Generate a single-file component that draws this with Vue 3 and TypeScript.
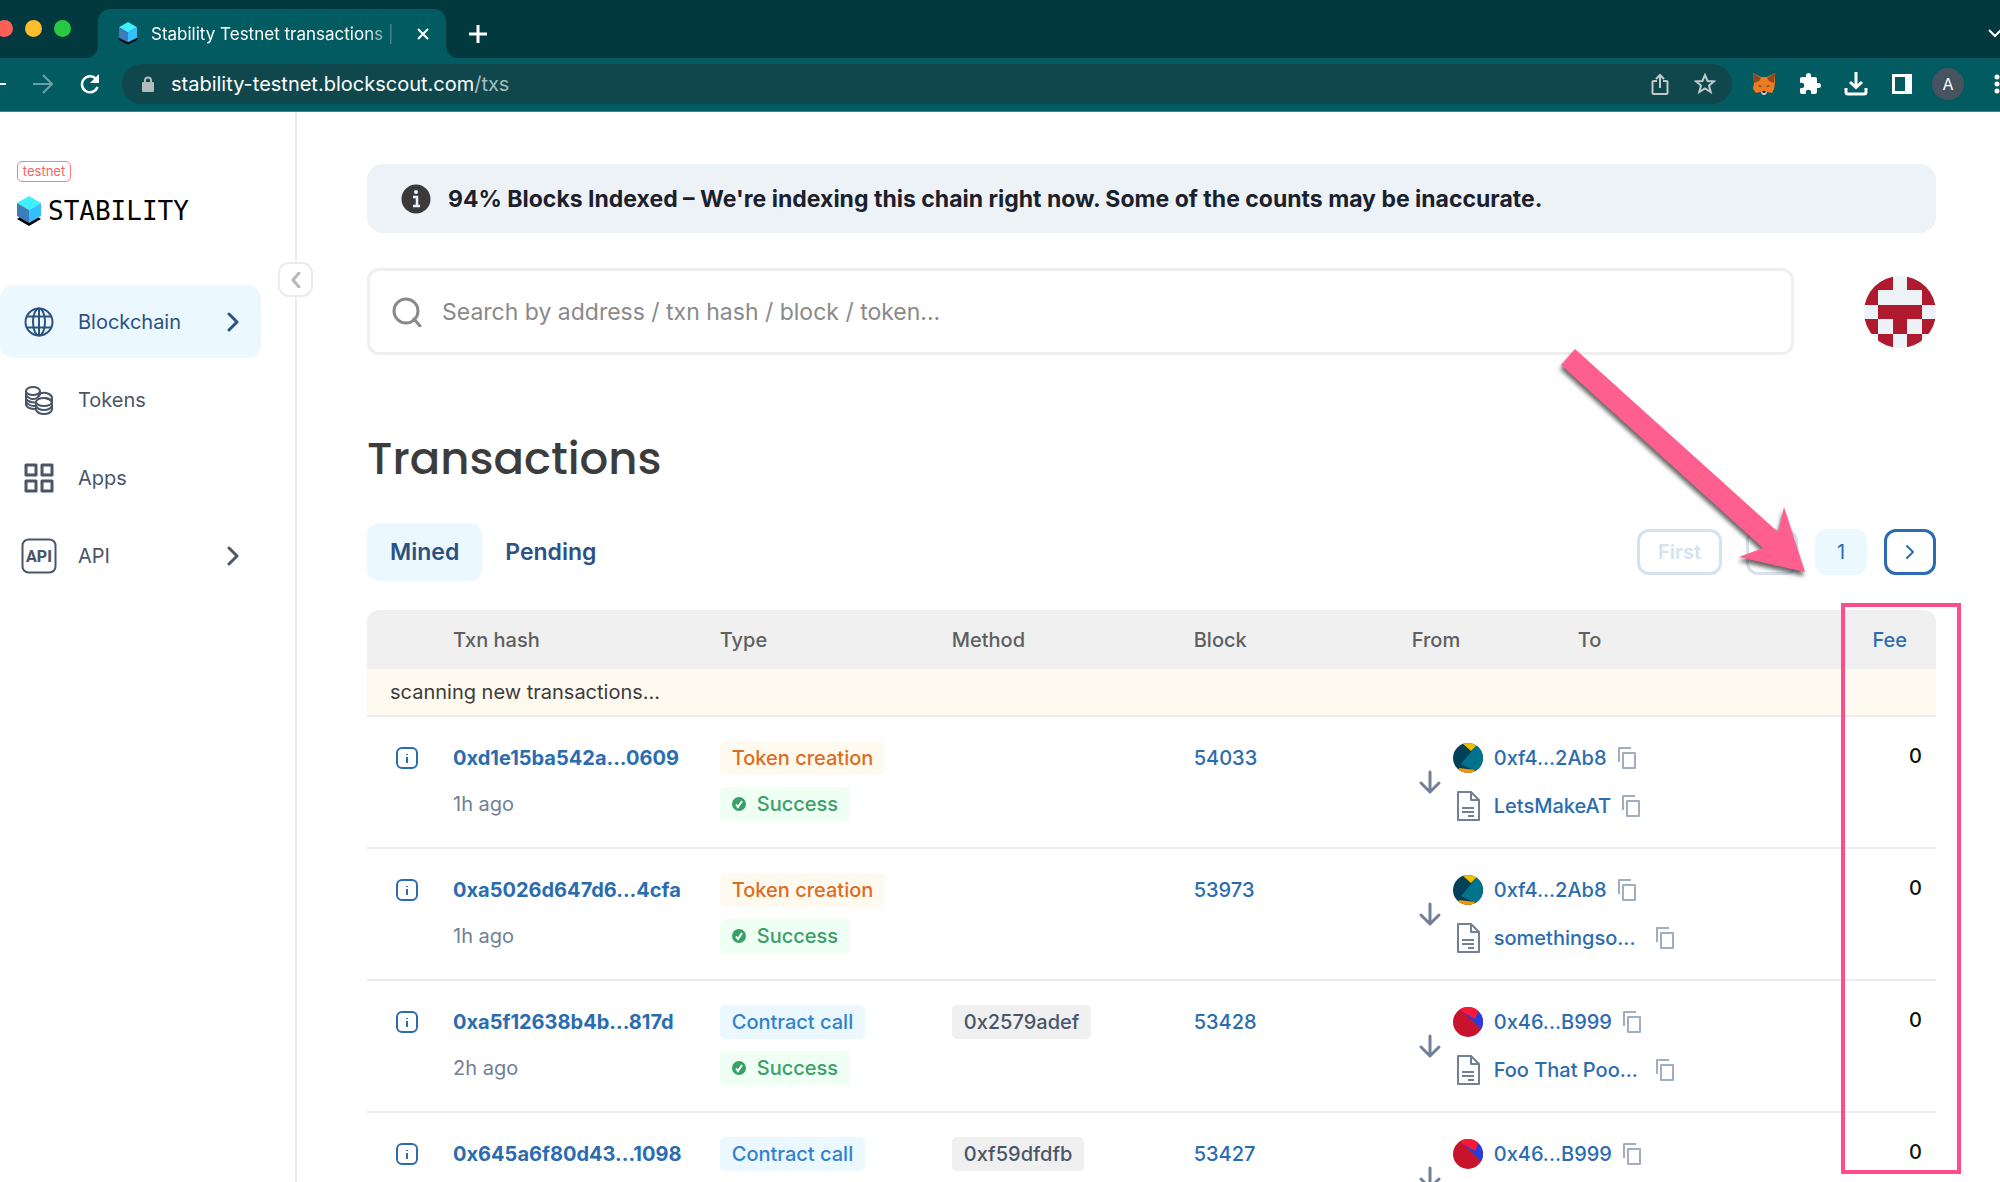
<script setup lang="ts">
interface NavItem { label: string; icon: 'globe' | 'coins' | 'grid' | 'api'; active?: boolean; expandable?: boolean }
interface Tx {
  hash: string
  age?: string
  type: string
  kind: 'creation' | 'call'
  status?: string
  method?: string
  block: string
  from: string
  avatar: 'teal' | 'red'
  to?: string
  clipped?: boolean
  fee: string
}

const nav: NavItem[] = [
  { label: 'Blockchain', icon: 'globe', active: true, expandable: true },
  { label: 'Tokens', icon: 'coins' },
  { label: 'Apps', icon: 'grid' },
  { label: 'API', icon: 'api', expandable: true },
]

const txs: Tx[] = [
  { hash: '0xd1e15ba542a...0609', age: '1h ago', type: 'Token creation', kind: 'creation', status: 'Success', block: '54033', from: '0xf4...2Ab8', avatar: 'teal', to: 'LetsMakeAT', fee: '0' },
  { hash: '0xa5026d647d6...4cfa', age: '1h ago', type: 'Token creation', kind: 'creation', status: 'Success', block: '53973', from: '0xf4...2Ab8', avatar: 'teal', to: 'somethingso...', clipped: true, fee: '0' },
  { hash: '0xa5f12638b4b...817d', age: '2h ago', type: 'Contract call', kind: 'call', status: 'Success', method: '0x2579adef', block: '53428', from: '0x46...B999', avatar: 'red', to: 'Foo That Poo...', clipped: true, fee: '0' },
  { hash: '0x645a6f80d43...1098', type: 'Contract call', kind: 'call', method: '0xf59dfdfb', block: '53427', from: '0x46...B999', avatar: 'red', fee: '0' },
]

// Filled cells of the 5x5 identicon, one string per row
const identicon = ['11011', '10001', '01110', '10101', '01010']
const identiconCells = identicon.flatMap((row, y) =>
  [...row].map((c, x) => ({ x, y, on: c === '1' })).filter((c) => c.on),
)
</script>

<template>
  <div class="window">
    <header class="chrome">
      <div class="tabstrip">
        <div class="lights"><i class="red"></i><i class="amber"></i><i class="green"></i></div>
        <div class="tab">
          <svg class="favicon" viewBox="0 0 26 32">
            <path d="M1 24 13 30 25 24V21L13 27 1 21z" fill="#000" />
            <path d="M13 0 25 7 13 14 1 7z" fill="#3ff0fc" />
            <path d="M1 7 13 14V27L1 21z" fill="#3d7dbb" />
            <path d="M25 7 13 14V27L25 21z" fill="#34c0ff" />
          </svg>
          <span class="tab-title">Stability Testnet transactions |</span>
          <button class="plain" aria-label="Close tab">
            <svg width="12" height="12" viewBox="0 0 12 12"><path d="M1 1 11 11M11 1 1 11" stroke="#fff" stroke-width="2" /></svg>
          </button>
        </div>
        <button class="plain new-tab" aria-label="New tab">
          <svg width="18" height="18" viewBox="0 0 18 18"><path d="M9 0V18M0 9H18" stroke="#fff" stroke-width="3" /></svg>
        </button>
        <button class="plain tab-search" aria-label="Search tabs">
          <svg width="14" height="10" viewBox="0 0 14 10"><path d="M1 1 7 7 13 1" fill="none" stroke="#fff" stroke-width="2" /></svg>
        </button>
      </div>
      <div class="toolbar">
        <button class="plain back" aria-label="Back">
          <svg width="20" height="20" viewBox="0 0 20 20"><path d="M1 10H20M10 1 1 10 10 19" fill="none" stroke="#fff" stroke-width="2" /></svg>
        </button>
        <button class="plain forward" aria-label="Forward">
          <svg width="20" height="20" viewBox="0 0 20 20"><path d="M0 10H18M10 1 19 10 10 19" fill="none" stroke="#6b9fa3" stroke-width="2" /></svg>
        </button>
        <button class="plain reload" aria-label="Reload">
          <svg width="20" height="20" viewBox="0 0 20 20"><path d="M16 5A8 8 0 1 0 17.500 13" fill="none" stroke="#fff" stroke-width="2.500" /><path d="M19 0V9H10z" fill="#fff" /></svg>
        </button>
        <div class="omnibox">
          <svg width="12" height="16" viewBox="0 0 12 16"><path d="M3 7V4.500a3 3 0 0 1 6 0V7" fill="none" stroke="#b4bbbf" stroke-width="2" /><rect y="6" width="12" height="10" rx="1" fill="#b4bbbf" /></svg>
          <span class="url">stability-testnet.blockscout.com<span class="path">/txs</span></span>
          <button class="plain" aria-label="Share">
            <svg width="18" height="22" viewBox="0 0 18 22"><path d="M6 8H2.500Q1.500 8 1.500 9V20Q1.500 21 2.500 21H15.500Q16.500 21 16.500 20V9Q16.500 8 15.500 8H12M9 15V2M5 6 9 2 13 6" fill="none" stroke="#c3c9cc" stroke-width="2" /></svg>
          </button>
          <button class="plain" aria-label="Bookmark">
            <svg width="22" height="21" viewBox="0 0 22 21"><path d="M11 2 13.600 8 20 8.400 15 12.600 16.700 19 11 15.500 5.300 19 7 12.600 2 8.400 8.400 8z" fill="none" stroke="#c3c9cc" stroke-width="2" /></svg>
          </button>
        </div>
        <div class="extensions">
          <button class="plain" aria-label="MetaMask">
            <svg width="24" height="24" viewBox="0 0 24 24">
              <path d="M1 1 9 5H15L23 1V11L22 17 20 21 15 20 13 22H11L9 20 4 21 1 17 2 11z" fill="#ee7b1e" />
              <path d="M1 1 9 6 7 9 2 11zM23 1 15 6 17 9 22 11z" fill="#8b4a22" />
              <path d="M10 19H14L15 21 13 23H11L9 21z" fill="#d8d0c8" />
              <path d="M10 19H14L13 21H11z" fill="#222" />
              <path d="M6 13 10 14 8 15zM18 13 14 14 16 15z" fill="#38404a" />
            </svg>
          </button>
          <button class="plain" aria-label="Extensions">
            <svg width="24" height="24" viewBox="0 0 24 24"><path d="M20.500 11H19V7a2 2 0 0 0-2-2h-4V3.500a2.500 2.500 0 0 0-5 0V5H4a2 2 0 0 0-2 2v3.800h1.500a2.700 2.700 0 0 1 0 5.400H2V20a2 2 0 0 0 2 2h3.800v-1.500a2.700 2.700 0 0 1 5.400 0V22H17a2 2 0 0 0 2-2v-4h1.500a2.500 2.500 0 0 0 0-5z" fill="#fff" /></svg>
          </button>
          <button class="plain" aria-label="Downloads">
            <svg width="24" height="24" viewBox="0 0 24 24"><path d="M12 0V15M6 10 12 15.500 18 10M2 16V20Q2 22 4 22H20Q22 22 22 20V16" fill="none" stroke="#fff" stroke-width="3" /></svg>
          </button>
          <button class="plain" aria-label="Side panel">
            <svg width="24" height="24" viewBox="0 0 24 24"><path d="M2 2H22V22H2zM5 5V19H15V5z" fill="#fff" fill-rule="evenodd" /></svg>
          </button>
          <button class="profile">A</button>
          <button class="plain menu" aria-label="Menu">
            <svg width="6" height="20" viewBox="0 0 6 20"><circle cx="3" cy="3" r="2.500" fill="#fff" /><circle cx="3" cy="10" r="2.500" fill="#fff" /><circle cx="3" cy="17" r="2.500" fill="#fff" /></svg>
          </button>
        </div>
      </div>
    </header>

    <div class="page">
      <aside class="sidebar">
        <span class="badge">testnet</span>
        <a class="logo" href="#">
          <svg width="26" height="32" viewBox="0 0 26 32">
            <path d="M1 24 13 31 25 24 22 22 13 27 4 22z" fill="#000" />
            <path d="M13 1 25 8 13 15 1 8z" fill="#3ff0fc" />
            <path d="M1 8 13 15V28L1 21z" fill="#3d7dbb" />
            <path d="M25 8 13 15V28L25 21z" fill="#34c0ff" />
          </svg>
          <span>STABILITY</span>
        </a>
        <nav>
          <a v-for="item in nav" :key="item.label" href="#" class="nav-item" :class="{ active: item.active }">
            <svg class="nav-icon" viewBox="0 0 36 36" fill="none" stroke="currentColor">
              <g v-if="item.icon === 'globe'" stroke-width="2">
                <circle cx="18" cy="18" r="13.500" />
                <ellipse cx="18" cy="18" rx="6" ry="13.500" />
                <path d="M6 12.500H30M6 23.500H30M18 4.500V31.500" />
              </g>
              <g v-else-if="item.icon === 'coins'" stroke-width="2">
                <ellipse cx="12" cy="9" rx="7" ry="4" />
                <path d="M5 9V23Q7 27 14 27M19 9V13M5 13Q8 17 12 17T19 13M5 17Q8 20.500 14 20.500M5 20Q8 24 14 24M16 13Q22 9 28 12 31 13.500 31 16V28" />
                <ellipse cx="23" cy="20" rx="8" ry="4" />
                <path d="M15 20V28Q17 32 23 32T31 28M15 24Q17 28 23 28T31 24M24 16Q29 17 31 20" />
              </g>
              <g v-else-if="item.icon === 'grid'" stroke-width="3" stroke-linejoin="round">
                <rect x="5" y="5" width="10" height="10" /><rect x="21" y="5" width="10" height="10" />
                <rect x="5" y="21" width="10" height="10" /><rect x="21" y="21" width="10" height="10" />
              </g>
              <template v-else>
                <rect x="1.500" y="1.500" width="33" height="33" rx="6" stroke-width="2" />
                <text x="18" y="24" text-anchor="middle" class="api-text">API</text>
              </template>
            </svg>
            <span class="nav-label">{{ item.label }}</span>
            <svg v-if="item.expandable" width="12" height="20" viewBox="0 0 12 20"><path d="M2 2 10 10 2 18" fill="none" stroke="currentColor" stroke-width="3" stroke-linecap="round" stroke-linejoin="round" /></svg>
          </a>
        </nav>
        <button class="collapse" aria-label="Collapse sidebar">
          <svg width="10" height="16" viewBox="0 0 10 16"><path d="M8 1 2 8 8 15" fill="none" stroke="#b8b8b8" stroke-width="3" stroke-linecap="round" stroke-linejoin="round" /></svg>
        </button>
      </aside>

      <main>
        <div class="notice" role="status">
          <svg width="30" height="30" viewBox="0 0 30 30"><circle cx="15" cy="15" r="14.500" fill="#3a3a3a" /><circle cx="15" cy="8" r="2" fill="#edf2f7" /><path d="M12 13H16V22M12 22H19" fill="none" stroke="#edf2f7" stroke-width="2.500" /></svg>
          <strong>94% Blocks Indexed – We're indexing this chain right now. Some of the counts may be inaccurate.</strong>
        </div>

        <div class="search-row">
          <label class="search">
            <svg width="30" height="30" viewBox="0 0 30 30"><circle cx="14" cy="14" r="12" fill="none" stroke="#8a8a8a" stroke-width="3" /><path d="M22 22 28 29" stroke="#8a8a8a" stroke-width="3" stroke-linecap="round" /></svg>
            <input type="search" placeholder="Search by address / txn hash / block / token..." aria-label="Search" />
          </label>
          <svg class="identicon" viewBox="0 0 5 5" role="img" aria-label="Account" shape-rendering="crispEdges">
            <rect width="5" height="5" fill="#edf2f7" />
            <rect v-for="c in identiconCells" :key="`${c.x}-${c.y}`" :x="c.x" :y="c.y" width="1" height="1" fill="#b01a2e" />
          </svg>
        </div>

        <h1>Transactions</h1>

        <div class="controls">
          <button class="switch selected">Mined</button>
          <button class="switch">Pending</button>
          <div class="pager">
            <button class="page-btn first" disabled>First</button>
            <button class="page-btn" disabled aria-label="Previous page"></button>
            <button class="page-btn current">1</button>
            <button class="page-btn" aria-label="Next page">
              <svg width="10" height="16" viewBox="0 0 10 16"><path d="M2 2 8 8 2 14" fill="none" stroke="currentColor" stroke-width="2" stroke-linecap="round" stroke-linejoin="round" /></svg>
            </button>
          </div>
          <svg class="pointer" width="260" height="240" viewBox="0 0 260 240">
            <path d="M11 25 25 9 228 192 234 167 255 232 189 217 213 208z" fill="#ff5f8f" />
          </svg>
        </div>

        <div class="table-wrap">
          <table>
            <colgroup>
              <col class="c-info" /><col class="c-hash" /><col class="c-type" /><col class="c-method" />
              <col class="c-block" /><col class="c-from" /><col /><col class="c-fee" />
            </colgroup>
            <thead>
              <tr><th></th><th>Txn hash</th><th>Type</th><th>Method</th><th>Block</th><th>From</th><th>To</th><th class="fee"><a href="#">Fee</a></th></tr>
            </thead>
            <tbody>
              <tr class="scanning"><td colspan="8">scanning new transactions...</td></tr>
              <tr v-for="tx in txs" :key="tx.hash" class="tx">
                <td class="info">
                  <button class="plain line" aria-label="Transaction details">
                    <svg width="22" height="22" viewBox="0 0 22 22"><rect x="1" y="1" width="20" height="20" rx="5" fill="none" stroke="#2b6cb0" stroke-width="2" /><path d="M11 10V16M11 7V8" stroke="#2b6cb0" stroke-width="2" /></svg>
                  </button>
                </td>
                <td>
                  <a class="line hash" href="#">{{ tx.hash }}</a>
                  <span v-if="tx.age" class="line age">{{ tx.age }}</span>
                </td>
                <td>
                  <span class="pill" :class="tx.kind">{{ tx.type }}</span>
                  <span v-if="tx.status" class="pill success">
                    <svg width="14" height="14" viewBox="0 0 14 14"><circle cx="7" cy="7" r="7" fill="#38a169" /><path d="M4 7.500 6 10 10 4" fill="none" stroke="#fff" stroke-width="2" /></svg>
                    {{ tx.status }}
                  </span>
                </td>
                <td><span v-if="tx.method" class="pill method">{{ tx.method }}</span></td>
                <td><a class="line" href="#">{{ tx.block }}</a></td>
                <td colspan="2">
                  <div class="route">
                    <svg width="24" height="26" viewBox="0 0 24 26"><path d="M12 3V23M3 14 12 23 21 14" fill="none" stroke="#718096" stroke-width="3" stroke-linecap="round" stroke-linejoin="round" /></svg>
                    <div class="parties">
                      <div class="party">
                        <svg class="avatar" viewBox="0 0 30 30">
                          <template v-if="tx.avatar === 'teal'">
                            <rect width="30" height="30" fill="#03415b" />
                            <path d="M9 0H26L18 8z" fill="#f2be00" />
                            <path d="M23 3 8 21 20 27 30 27V3z" fill="#00728c" />
                            <path d="M6 25 22 27 20 30H6z" fill="#fa9600" />
                          </template>
                          <template v-else>
                            <rect width="30" height="30" fill="#c7142c" />
                            <path d="M6 2 20 14 30 24V3z" fill="#233fe1" />
                            <path d="M6 0H27L22 12 8 4z" fill="#fb1837" />
                          </template>
                        </svg>
                        <a href="#">{{ tx.from }}</a>
                        <button class="plain" aria-label="Copy address">
                          <svg width="18" height="22" viewBox="0 0 18 22"><path d="M1 15V1H13M5 6H17V21H5z" fill="none" stroke="#a0aec0" stroke-width="2" stroke-linejoin="round" /></svg>
                        </button>
                      </div>
                      <div class="party">
                        <template v-if="tx.to">
                          <svg class="doc" viewBox="0 0 30 30"><path d="M5 1H18L26 9V29H5zM18 1V9H26M9 17H21M9 21H21M15 25H21" fill="none" stroke="#718096" stroke-width="2" stroke-linejoin="round" /></svg>
                          <a href="#" :class="{ clipped: tx.clipped }">{{ tx.to }}</a>
                          <button class="plain" aria-label="Copy address">
                            <svg width="18" height="22" viewBox="0 0 18 22"><path d="M1 15V1H13M5 6H17V21H5z" fill="none" stroke="#a0aec0" stroke-width="2" stroke-linejoin="round" /></svg>
                          </button>
                        </template>
                      </div>
                    </div>
                  </div>
                </td>
                <td class="fee"><span class="line">{{ tx.fee }}</span></td>
              </tr>
            </tbody>
          </table>
          <div class="highlight"></div>
        </div>
      </main>
    </div>
  </div>
</template>

<style>
body { margin: 0; background: #fff; }
</style>

<style scoped>
* { box-sizing: border-box; }
.window {
  display: flex;
  flex-direction: column;
  height: 100vh;
  overflow: hidden;
  font-family: Inter, "Liberation Sans", sans-serif;
  font-size: 20px;
  color: #101112;
}
a { color: #2b6cb0; text-decoration: none; }
button { font-family: inherit; font-size: inherit; cursor: pointer; }
svg { display: block; flex: none; }
.plain { display: flex; align-items: center; padding: 0; border: 0; background: none; flex: none; }

.chrome { flex: none; color: #fff; }
.tabstrip { display: flex; align-items: center; height: 58px; background: #02393e; padding-top: 9px; }
.lights { display: flex; gap: 12px; width: 98px; height: 28px; margin-left: -4px; flex: none; }
.lights i { width: 17px; height: 17px; border-radius: 50%; }
.lights .red { background: #ff5f57; }
.lights .amber { background: #febc2e; }
.lights .green { background: #28c840; }
.tab {
  position: relative;
  display: flex;
  align-items: center;
  width: 348px;
  height: 49px;
  margin-left: 4px;
  padding: 0 17px 0 20px;
  background: #035b62;
  border-radius: 12px 12px 0 0;
}
.tab::before, .tab::after { content: ""; position: absolute; bottom: 0; width: 12px; height: 12px; }
.tab::before { right: 100%; background: radial-gradient(circle at 0 0, transparent 12px, #035b62 12px); }
.tab::after { left: 100%; background: radial-gradient(circle at 100% 0, transparent 12px, #035b62 12px); }
.favicon { width: 20px; height: 24px; }
.tab-title {
  flex: 1;
  margin: 0 16px 0 13px;
  overflow: hidden;
  white-space: nowrap;
  font-size: 17px;
  mask-image: linear-gradient(to right, #000 85%, transparent 100%);
}
.new-tab { margin-left: 23px; }
.tab-search { margin-left: auto; margin-right: -2px; }
.toolbar { display: flex; align-items: center; height: 54px; padding: 0 1px 2px 0; background: #035b62; border-bottom: 1px solid #3f868b; }
.back { margin-left: -14px; }
.forward { margin-left: 27px; }
.reload { margin-left: 27px; }
.omnibox {
  display: flex;
  align-items: center;
  flex: 1;
  gap: 25px;
  height: 40px;
  margin-left: 22px;
  padding: 0 16px 0 20px;
  background: #0f474d;
  border-radius: 20px;
}
.url { flex: 1; margin-left: -8px; white-space: nowrap; }
.path { color: #a9bcbf; }
.extensions { display: flex; align-items: center; gap: 22px; margin-left: 20px; }
.profile { width: 32px; height: 32px; margin-left: -4px; padding: 0; border: 0; border-radius: 50%; background: #47535f; color: #fff; font-size: 16px; }
.menu { margin-left: 8px; margin-right: -1px; }

.page { display: flex; flex: 1; min-height: 0; }
.sidebar { position: relative; flex: none; width: 297px; border-right: 2px solid #ececec; padding-top: 49px; }
.badge {
  display: block;
  width: 54px;
  margin-left: 17px;
  border: 1px solid #fc8181;
  border-radius: 5px;
  color: #f56565;
  font-size: 13px;
  line-height: 19px;
  text-align: center;
}
.logo { display: flex; align-items: center; gap: 6px; margin: 12px 0 0 16px; height: 34px; color: #000; font: 26px "DejaVu Sans Mono", monospace; }
nav { display: flex; flex-direction: column; gap: 5px; margin-top: 57px; }
.nav-item { display: flex; align-items: center; width: 261px; height: 73px; padding: 0 22px 0 21px; border-radius: 14px; color: #4a5568; }
.nav-item.active { background: #ebf8ff; color: #2c5282; }
.nav-icon { width: 36px; height: 36px; }
.api-text { font: 800 16px Roboto, sans-serif; fill: currentColor; stroke: none; }
.nav-label { flex: 1; margin-left: 21px; }
.collapse {
  position: absolute;
  top: 150px;
  right: -18px;
  display: flex;
  align-items: center;
  justify-content: center;
  width: 35px;
  height: 35px;
  padding: 0;
  background: #fff;
  border: 2px solid #ececec;
  border-radius: 11px;
}

main { flex: 1; min-width: 0; padding: 52px 64px 0 70px; }
.notice { display: flex; align-items: center; gap: 17px; height: 69px; padding: 0 34px; border-radius: 16px; background: #edf2f7; color: #1a202c; font-size: 23px; }
.notice strong { font-weight: 700; white-space: nowrap; }
.search-row { display: flex; align-items: center; gap: 70px; margin-top: 35px; }
.search { display: flex; align-items: center; flex: 1; gap: 20px; height: 87px; padding: 0 22px; border: 3px solid #efefef; border-radius: 12px; }
.search input { flex: 1; min-width: 0; padding: 0; border: 0; outline: 0; background: none; font: 23px Inter, sans-serif; }
.search input::placeholder { color: #8a8a8a; opacity: 1; }
.identicon { width: 72px; height: 72px; border-radius: 50%; }
h1 { margin: 75px 0 0; font-family: Poppins, Inter, sans-serif; font-size: 45px; font-weight: 500; line-height: 58px; color: #3c3c3c; }
.controls { position: relative; display: flex; align-items: center; height: 58px; margin-top: 35px; }
.switch { height: 58px; padding: 0 23px; border: 0; border-radius: 12px; background: none; color: #2c5282; font-size: 23px; font-weight: 600; }
.selected { background: #ebf8ff; }
.pager { display: flex; gap: 17px; margin-left: auto; }
.page-btn {
  display: flex;
  align-items: center;
  justify-content: center;
  width: 52px;
  height: 46px;
  padding: 0;
  border: 3px solid #2b6cb0;
  border-radius: 12px;
  background: #fff;
  color: #2b6cb0;
}
.page-btn:disabled { border-color: #d5e2ef; color: #d5e2ef; font-weight: 600; }
.page-btn.first { width: 85px; margin-right: 7px; }
.page-btn.current { border-color: #ebf8ff; background: #ebf8ff; }
.pointer { position: absolute; right: 126px; bottom: 1px; filter: drop-shadow(-1px 4px 2px #00000099); }

.table-wrap { position: relative; margin-top: 29px; }
table { width: 100%; table-layout: fixed; border-collapse: separate; border-spacing: 0; }
.c-info { width: 86px; }
.c-hash { width: 17%; }
.c-type { width: 232px; }
.c-method { width: 242px; }
.c-block { width: 218px; }
.c-from { width: 166px; }
.c-fee { width: 95px; }
th { height: 59px; padding: 0; background: #f0f0f0; color: #5f5f5f; font-weight: 500; text-align: left; }
th:first-child { border-top-left-radius: 12px; }
th:last-child { border-top-right-radius: 12px; }
th.fee { padding-right: 29px; text-align: right; }
td { padding: 0; border-bottom: 2px solid #ececec; vertical-align: top; }
.scanning td { height: 48px; padding-left: 23px; background: #fffaf0; color: #3c3c3c; vertical-align: middle; }
.tx td { height: 132px; padding-top: 24px; }
.line { display: flex; align-items: center; height: 34px; }
td .line { font-weight: 500; }
td .hash { font-weight: 700; }
td .age { margin-top: 12px; color: #718096; font-weight: 400; }
.info .line { margin-left: 29px; }
.pill { display: flex; align-items: center; gap: 11px; width: fit-content; height: 34px; padding: 0 12px; border-radius: 5px; font-weight: 500; white-space: nowrap; }
.pill + .pill { margin-top: 12px; }
.creation { background: #fffaf0; color: #dd6b20; }
.call { background: #ebf8ff; color: #3182ce; }
.success { background: #f0fff4; color: #38a169; }
.method { background: #f0f0f0; color: #4a5568; }
.route { display: flex; align-items: center; gap: 11px; padding: 2px 0 0 6px; }
.parties { display: flex; flex-direction: column; gap: 18px; }
.party { display: flex; align-items: center; gap: 11px; height: 30px; font-weight: 500; }
.avatar { width: 30px; height: 30px; border-radius: 50%; }
.doc { width: 30px; height: 30px; }
.clipped { width: 151px; white-space: nowrap; }
.tx .fee { padding: 22px 14px 0 0; }
.fee .line { justify-content: flex-end; font-weight: 500; }
.highlight { position: absolute; top: -7px; right: -25px; width: 120px; height: 571px; border: 4px solid #ff4d8b; }
</style>
